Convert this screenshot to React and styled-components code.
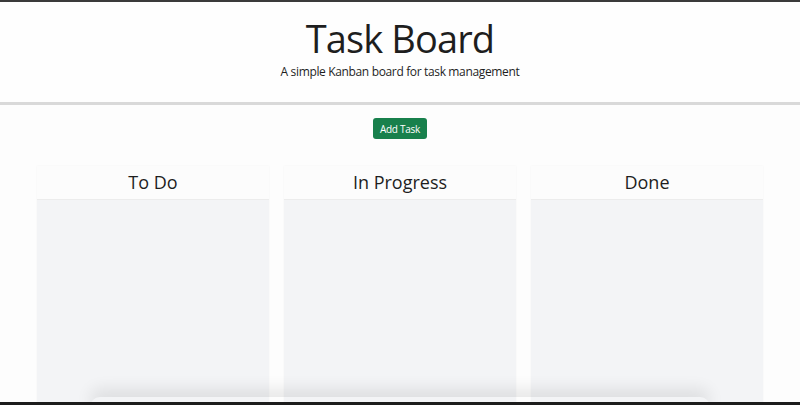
import React from "react";
import styled, { createGlobalStyle } from "styled-components";

const Global = createGlobalStyle`
  html, body { margin: 0; padding: 0; }
  body {
    background: #fdfdfd;
    font-family: "Open Sans", "Noto Sans", sans-serif;
    color: #212121;
    height: 405px;
    overflow: hidden;
  }
`;

const Page = styled.div`
  position: relative;
  height: 405px;
  border-top: 2px solid #3a3a3a;
  box-sizing: border-box;
  display: flex;
  flex-direction: column;
  overflow: hidden;
`;

const Header = styled.header`
  background: #fefefe;
  border-bottom: 3px solid #d9d9d9;
  height: 103px;
  box-sizing: border-box;
  display: flex;
  flex-direction: column;
  align-items: center;
  padding-top: 11px;
`;

const Title = styled.h1`
  margin: 0;
  font-size: 38px;
  letter-spacing: -0.9px;
  font-weight: 400;
  line-height: 50px;
  color: #1e1e1e;
`;

const Subtitle = styled.p`
  margin: 0;
  font-size: 12px;
  letter-spacing: -0.35px;
  line-height: 18px;
  color: #1e1e1e;
`;

const Toolbar = styled.div`
  display: flex;
  justify-content: center;
  padding-top: 13px;
`;

const Button = styled.button`
  background: #18804c;
  color: #fff;
  border: none;
  border-radius: 3px;
  font-family: "Open Sans", sans-serif;
  font-size: 10px;
  letter-spacing: -0.25px;
  height: 21px;
  padding: 0 7px;
  cursor: pointer;
`;

const Board = styled.div`
  display: grid;
  grid-template-columns: repeat(3, 232px);
  column-gap: 15px;
  justify-content: center;
  margin-top: 27px;
  flex: 1;
`;

const Column = styled.section`
  display: flex;
  flex-direction: column;
  box-shadow: 0 0 2px rgba(0,0,0,0.04);
`;

const ColumnHeader = styled.h2`
  margin: 0;
  height: 34px;
  box-sizing: border-box;
  background: #fcfcfc;
  border-bottom: 1px solid #ececec;
  text-align: center;
  font-size: 18px;
  font-weight: 400;
  line-height: 32px;
  color: #1e1e1e;
`;

const ColumnBody = styled.div`
  flex: 1;
  background: #f3f4f6;
`;

const Shade = styled.div`
  position: absolute;
  left: 90px;
  right: 90px;
  bottom: -12px;
  height: 20px;
  border-radius: 20px;
  box-shadow: 0 -8px 16px rgba(0,0,0,0.09);
  pointer-events: none;
`;

const BottomBar = styled.div`
  position: absolute;
  left: 0;
  right: 0;
  bottom: 0;
  height: 3px;
  background: #1c1c1c;
`;

const columns = ["To Do", "In Progress", "Done"];

export default function App() {
  return (
    <>
      <Global />
      <Page>
        <Header>
          <Title>Task Board</Title>
          <Subtitle>A simple Kanban board for task management</Subtitle>
        </Header>
        <Toolbar>
          <Button>Add Task</Button>
        </Toolbar>
        <Board>
          {columns.map((c) => (
            <Column key={c}>
              <ColumnHeader>{c}</ColumnHeader>
              <ColumnBody />
            </Column>
          ))}
        </Board>
        <Shade />
        <BottomBar />
      </Page>
    </>
  );
}
